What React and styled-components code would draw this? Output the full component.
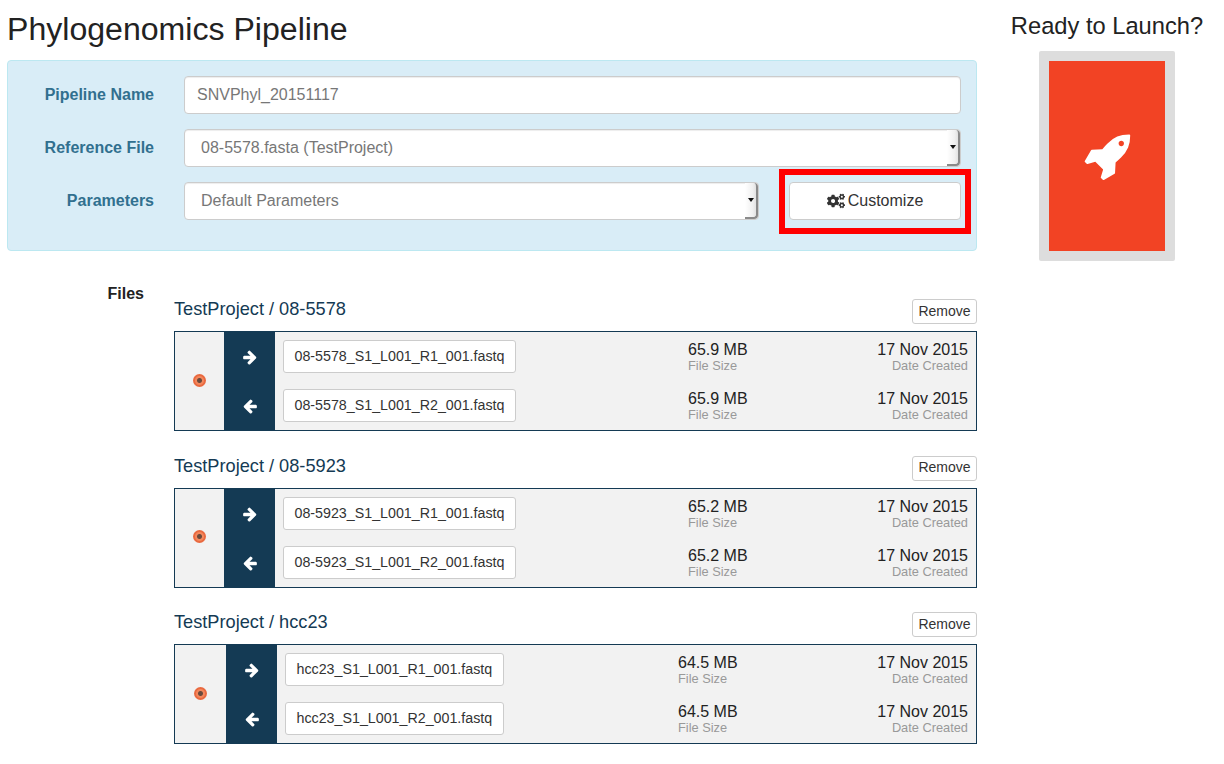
import React from 'react';
import styled, { createGlobalStyle } from 'styled-components';
import { FaCogs } from 'react-icons/fa';

const GlobalStyle = createGlobalStyle`
  html, body {
    margin: 0;
    background: #fff;
    color: #222;
    font-family: "Liberation Sans", Arial, sans-serif;
    font-size: 16px;
  }
  * { box-sizing: border-box; }
`;

const Page = styled.div`
  display: flex;
  padding: 12px 0 20px 7px;
`;

const Main = styled.main`
  width: 970px;
  flex: none;
`;

const Title = styled.h1`
  margin: 0 0 13px;
  font-size: 32.1px;
  font-weight: 400;
  line-height: 35px;
  color: #222;
`;

const Side = styled.aside`
  flex: 1;
  display: flex;
  flex-direction: column;
  align-items: center;
  padding-left: 13px;
`;

const SideTitle = styled.h2`
  margin: 0 0 11px;
  font-size: 23.7px;
  font-weight: 400;
  line-height: 28px;
  color: #222;
`;

const LaunchFrame = styled.div`
  width: 136px;
  height: 210px;
  padding: 10px;
  background: #ddd;
  border-radius: 2px;
`;

const LaunchButton = styled.button`
  display: flex;
  align-items: center;
  justify-content: center;
  width: 100%;
  height: 100%;
  padding: 0;
  border: 0;
  background: #f24324;
  color: #fff;
`;

const FormPanel = styled.section`
  display: flex;
  flex-direction: column;
  gap: 15px;
  padding: 15px 15px 30px;
  background: #d9edf7;
  border: 1px solid #bce8f1;
  border-radius: 4px;
`;

const FormRow = styled.div`
  display: flex;
  align-items: center;
`;

const Label = styled.label`
  width: 131px;
  margin-right: 30px;
  flex: none;
  text-align: right;
  font-weight: 700;
  color: #31708f;
`;

const TextInput = styled.input`
  flex: 1;
  height: 38px;
  padding: 0 12px;
  background: #fff;
  border: 1px solid #ccc;
  border-radius: 4px;
  box-shadow: inset 0 1px 1px rgba(0, 0, 0, 0.075);
  font: inherit;
  color: #777;
`;

const SelectBox = styled.div`
  display: flex;
  align-items: stretch;
  flex: ${(p) => (p.$narrow ? 'none' : '1')};
  width: ${(p) => (p.$narrow ? '575px' : 'auto')};
  height: 38px;
  background: #fff;
  border: 1px solid #ccc;
  border-radius: 4px;
  box-shadow: inset 0 1px 1px rgba(0, 0, 0, 0.075);
`;

const SelectText = styled.div`
  flex: 1;
  padding-left: 16px;
  line-height: 36px;
  color: #777;
`;

const SelectArrow = styled.div`
  display: flex;
  align-items: center;
  justify-content: center;
  width: 13px;
  background: linear-gradient(to right, #fff, #f0f0f0 70%, #e2e2e2);
  border-right: 2px solid #8a8a8a;
  border-bottom: 2px solid #8a8a8a;
  border-radius: 0 4px 4px 0;

  &::after {
    content: '';
    border-left: 3px solid transparent;
    border-right: 3px solid transparent;
    border-top: 4px solid #111;
  }
`;

const CustomizeWrap = styled.div`
  position: relative;
  width: 172px;
  margin-left: 30px;
  flex: none;
`;

const Highlight = styled.div`
  position: absolute;
  inset: -13px -10px -14px -10px;
  border: 6px solid #f00;
  pointer-events: none;
`;

const CustomizeButton = styled.button`
  display: flex;
  align-items: center;
  justify-content: center;
  gap: 3px;
  width: 100%;
  height: 38px;
  background: #fff;
  border: 1px solid #ccc;
  border-radius: 4px;
  font: inherit;
  color: #333;
`;

const FilesSection = styled.section`
  display: flex;
  margin-top: 35px;
`;

const FilesLabel = styled.div`
  width: 137px;
  margin-right: 30px;
  flex: none;
  text-align: right;
  font-weight: 700;
  line-height: 16px;
  color: #222;
`;

const Groups = styled.div`
  flex: 1;
  padding-top: 13px;
`;

const Group = styled.div`
  margin-bottom: 24.5px;
`;

const GroupHeader = styled.div`
  display: flex;
  justify-content: space-between;
  align-items: flex-start;
  margin-bottom: 7px;
`;

const GroupTitle = styled.div`
  font-size: 18.2px;
  line-height: 20px;
  color: #143a54;
`;

const RemoveButton = styled.button`
  width: 65px;
  height: 25px;
  padding: 0 0 2px;
  background: #fff;
  border: 1px solid #ccc;
  border-radius: 3px;
  font: inherit;
  font-size: 14px;
  color: #333;
`;

const FileTable = styled.div`
  display: grid;
  grid-template-columns: ${(p) => p.$radio}px 51px 1fr;
  height: 100px;
  background: #f2f2f2;
  border: 1px solid #143a54;
`;

const RadioCell = styled.div`
  display: flex;
  align-items: center;
  justify-content: center;
  padding-bottom: 2px;
`;

const Radio = styled.span`
  width: 13px;
  height: 13px;
  border-radius: 50%;
  background: radial-gradient(circle, #6a4a3c 0 2px, #f4875c 3px 4px, #e9693f 5px 6.5px);
`;

const DirectionCell = styled.div`
  display: grid;
  grid-template-rows: 49px 49px;
  background: #143a54;
  color: #fff;
`;

const Direction = styled.div`
  display: flex;
  align-items: center;
  justify-content: center;
  padding-top: 1px;
`;

const FileRows = styled.div`
  display: grid;
  grid-template-rows: 49px 49px;
`;

const FileRow = styled.div`
  display: grid;
  grid-template-columns: ${(p) => p.$nameWidth}px auto 1fr;
  align-items: center;
  padding: 0 8px;
`;

const FileName = styled.div`
  justify-self: start;
  height: 33px;
  padding: 0 10.5px;
  background: #fff;
  border: 1px solid #ccc;
  border-radius: 3px;
  font-size: 14.25px;
  line-height: 31px;
  color: #333;
`;

const Stat = styled.div`
  text-align: ${(p) => (p.$right ? 'right' : 'left')};
  line-height: 16px;
  padding-top: 2px;
`;

const StatValue = styled.div`
  color: #222;
`;

const StatLabel = styled.div`
  font-size: 12.8px;
  line-height: 15px;
  color: #999;
`;

const RocketIcon = () => (
  <svg width="50" height="50" viewBox="0 0 1792 1792" fill="currentColor">
    <path d="M1504 448q0-40-28-68t-68-28-68 28-28 68 28 68 68 28 68-28 28-68zm224-288q0 249-75.5 430.5t-253.5 360.5q-81 80-195 176l-20 379q-2 16-16 26l-384 224q-7 4-16 4-12 0-23-9l-64-64q-13-14-8-32l85-276-281-281-276 85q-3 1-9 1-14 0-23-9l-64-64q-17-19-5-39l224-384q10-14 26-16l379-20q96-114 176-195 188-187 358-258t431-71q14 0 23 9t9 23z" />
  </svg>
);

const ArrowRightIcon = () => (
  <svg width="16" height="16" viewBox="0 0 1792 1792" fill="currentColor">
    <path d="M1600 960q0 54-37 91l-651 651q-39 37-91 37-51 0-90-37l-75-75q-38-38-38-91t38-91l293-293h-704q-52 0-84.5-37.5t-32.5-90.5v-128q0-53 32.5-90.5t84.5-37.5h704l-293-294q-38-36-38-90t38-90l75-75q38-38 90-38 53 0 91 38l651 651q37 35 37 90z" />
  </svg>
);

const ArrowLeftIcon = () => (
  <svg width="16" height="16" viewBox="0 0 1792 1792" fill="currentColor">
    <path d="M1664 896v128q0 53-32.5 90.5t-84.5 37.5h-704l293 294q38 36 38 90t-38 90l-75 75q-38 38-90 38-53 0-91-38l-651-651q-37-35-37-90 0-54 37-91l651-651q39-38 91-38 51 0 90 38l75 74q38 38 38 91t-38 91l-293 293h704q52 0 84.5 37.5t32.5 90.5z" />
  </svg>
);

const fileGroups = [
  {
    title: 'TestProject / 08-5578',
    radio: 49,
    nameWidth: 405,
    size: '65.9 MB',
    files: ['08-5578_S1_L001_R1_001.fastq', '08-5578_S1_L001_R2_001.fastq'],
  },
  {
    title: 'TestProject / 08-5923',
    radio: 49,
    nameWidth: 405,
    size: '65.2 MB',
    files: ['08-5923_S1_L001_R1_001.fastq', '08-5923_S1_L001_R2_001.fastq'],
  },
  {
    title: 'TestProject / hcc23',
    radio: 51,
    nameWidth: 393,
    size: '64.5 MB',
    files: ['hcc23_S1_L001_R1_001.fastq', 'hcc23_S1_L001_R2_001.fastq'],
  },
];

export default function App() {
  return (
    <>
      <GlobalStyle />
      <Page>
        <Main>
          <Title>Phylogenomics Pipeline</Title>
          <FormPanel>
            <FormRow>
              <Label>Pipeline Name</Label>
              <TextInput readOnly value="SNVPhyl_20151117" />
            </FormRow>
            <FormRow>
              <Label>Reference File</Label>
              <SelectBox>
                <SelectText>08-5578.fasta (TestProject)</SelectText>
                <SelectArrow />
              </SelectBox>
            </FormRow>
            <FormRow>
              <Label>Parameters</Label>
              <SelectBox $narrow>
                <SelectText>Default Parameters</SelectText>
                <SelectArrow />
              </SelectBox>
              <CustomizeWrap>
                <CustomizeButton>
                  <FaCogs size={18} />
                  Customize
                </CustomizeButton>
                <Highlight />
              </CustomizeWrap>
            </FormRow>
          </FormPanel>
          <FilesSection>
            <FilesLabel>Files</FilesLabel>
            <Groups>
              {fileGroups.map((group) => (
                <Group key={group.title}>
                  <GroupHeader>
                    <GroupTitle>{group.title}</GroupTitle>
                    <RemoveButton>Remove</RemoveButton>
                  </GroupHeader>
                  <FileTable $radio={group.radio}>
                    <RadioCell>
                      <Radio />
                    </RadioCell>
                    <DirectionCell>
                      <Direction>
                        <ArrowRightIcon />
                      </Direction>
                      <Direction>
                        <ArrowLeftIcon />
                      </Direction>
                    </DirectionCell>
                    <FileRows>
                      {group.files.map((file) => (
                        <FileRow key={file} $nameWidth={group.nameWidth}>
                          <FileName>{file}</FileName>
                          <Stat>
                            <StatValue>{group.size}</StatValue>
                            <StatLabel>File Size</StatLabel>
                          </Stat>
                          <Stat $right>
                            <StatValue>17 Nov 2015</StatValue>
                            <StatLabel>Date Created</StatLabel>
                          </Stat>
                        </FileRow>
                      ))}
                    </FileRows>
                  </FileTable>
                </Group>
              ))}
            </Groups>
          </FilesSection>
        </Main>
        <Side>
          <SideTitle>Ready to Launch?</SideTitle>
          <LaunchFrame>
            <LaunchButton>
              <RocketIcon />
            </LaunchButton>
          </LaunchFrame>
        </Side>
      </Page>
    </>
  );
}
